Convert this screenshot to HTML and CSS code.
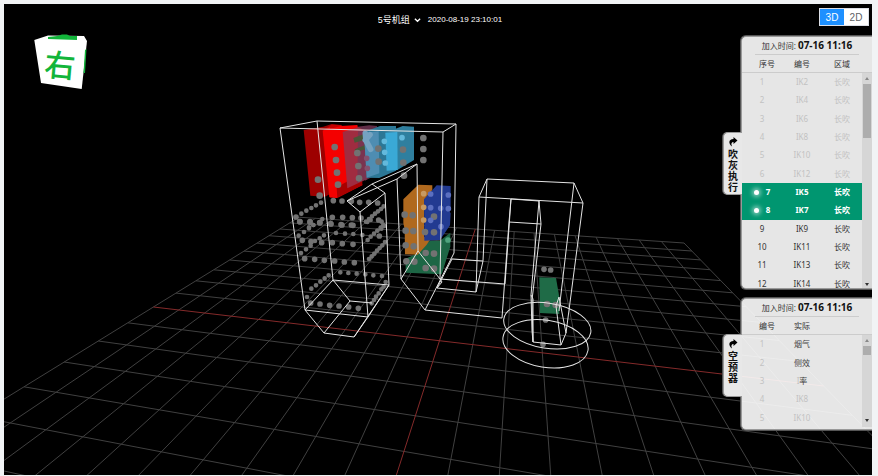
FILE: index.html
```html
<!DOCTYPE html>
<html lang="zh-CN">
<head>
<meta charset="utf-8">
<title>5号机组</title>
<link rel="stylesheet" href="styles.css">
</head>
<body>
<main class="stage">
  <svg class="scene" viewBox="4 4 868 471" preserveAspectRatio="xMidYMid slice" aria-hidden="true">
    <g id="grid" class="grid"></g>

    <!-- heating surfaces -->
    <g transform="translate(270 110) scale(.33333)">
      <path fill="#9d0000" d="M101 60L160 50 185 42 215 45 212 235 165 260 121 257z"/>
      <path fill="#c40000" d="M160 60L185 44 214 46 240 240 200 264 180 262z"/>
      <path fill="#f40000" d="M160 62L212 48 262 45 266 60 240 70 277 225 200 264 180 262z"/>
      <path fill="#f40000" d="M158 62L180 52 182 262 178 262z"/>
      <path fill="#a90000" d="M200 232L277 190 277 226 202 264z"/>
      <path fill="#5f2c46" d="M262 50L298 46 321 48 327 190 285 212z"/>
      <path fill="#a02c40" d="M218 66L264 52 284 60 290 208 232 235z"/>
      <path fill="#7a3450" d="M264 64L284 62 290 208 262 218z"/>
      <path fill="#4a5538" d="M250 84L282 72 282 90 254 98zM254 118L284 106 286 118 258 126z"/>
      <path fill="#2c7796" d="M282 66L330 48 378 48 378 182 328 204 290 203z"/>
      <path fill="#4e8db2" d="M282 68L326 64 328 190 290 203z"/>
      <path fill="#2f7f9f" d="M346 68L398 48 432 50 432 150 382 180 350 182z"/>
      <path fill="#3aa9d6" d="M346 68L382 66 383 180 350 182z"/>
      <path fill="#1d6645" d="M407 446L438 432 480 392 510 392 541 368 541 410 515 493 407 488z"/>
      <path fill="#b0691e" d="M400 268L445 224 487 226 487 240 462 270 462 380 482 386 470 404 443 434 405 433 404 358 400 340z"/>
      <path fill="#223a91" d="M462 268L500 226 542 228 542 290 534 296 542 310 540 346 510 390 463 392z"/>
    </g>
    <path fill="#1f6b47" d="M539.300 277.300L556 278 559.300 297 559.300 314 540 313z"/>

    <!-- measuring points, upper part -->
    <g class="dots" transform="translate(270 110) scale(.33333)">
      <path class="large" d="M194 111h0M198 150h0M201 188h0M204 224h0M144 209h0M149 257h0M262 129h0M265 168h0M267 205h0M325 116h0M326 155h0M399 119h0M400 158h0M402 197h0M460 84h0M460 117h0M460 150h0M404 314h0M428 316h0M492 320h0"/>
      <path d="M190 272h0M216 273h0M244 274h0M269 277h0M296 277h0M323 279h0M90 335h0M120 337h0M149 338h0M78 321h0M187 322h0M218 322h0M247 323h0M273 324h0M182 341h0M216 345h0M249 346h0M326 330h0"/>
      <path class="small" d="M153 278h0M138 286h0M124 294h0M109 302h0M94 311h0M117 355h0M130 345h0M157 327h0M288 335h0M297 327h0M306 319h0M315 311h0M324 304h0M333 297h0M341 289h0M340 345h0M332 353h0"/>
      <path stroke="#63b9dc" d="M396 83h0M343 94h0M344 127h0M346 159h0"/>
      <path stroke="#75a3c0" stroke-width="4" fill="none" d="M286 70L288 92 302 118M286 90L300 74"/>
      <path stroke="#83516f" d="M290 145h0M292 175h0"/>
      <path stroke="#c79a62" d="M461 251h0M461 292h0M461 330h0"/>
      <path stroke="#5b6fc0" d="M482 252h0M482 293h0M512 295h0M535 255h0M535 296h0M513 350h0M482 331h0"/>
    </g>
    <!-- measuring points, lower part -->
    <g class="dots" transform="translate(270 220) scale(.33333)">
      <path class="large" d="M407 32h0M430 33h0M465 36h0M492 37h0M407 76h0M431 79h0M409 124h0M433 125h0M467 99h0M492 101h0M467 144h0M492 146h0"/>
      <path d="M89 5h0M120 5h0M150 8h0M183 12h0M213 14h0M244 15h0M97 61h0M123 65h0M155 68h0M187 68h0M217 71h0M249 73h0M328 48h0M104 116h0M134 118h0M163 121h0M194 123h0M223 126h0M253 128h0M122 249h0M150 252h0M179 256h0M207 258h0M236 261h0M265 265h0"/>
      <path class="small" d="M130 15h0M117 22h0M102 36h0M86 47h0M135 63h0M149 55h0M162 46h0M198 39h0M225 41h0M250 42h0M277 45h0M335 5h0M292 6h0M302 0h0M343 18h0M334 26h0M322 32h0M312 41h0M302 50h0M293 60h0M345 66h0M337 76h0M329 84h0M321 92h0M313 101h0M305 109h0M297 117h0M122 77h0M108 88h0M93 99h0M211 157h0M235 159h0M260 161h0M286 163h0M310 166h0M336 168h0M176 166h0M164 175h0M151 185h0M138 196h0M124 206h0M111 231h0M347 186h0M341 200h0M334 208h0M326 220h0M318 230h0M312 240h0M305 250h0"/>
      <path stroke="#4fa37e" d="M534 60h0"/>
    </g>
    <g class="dots" transform="translate(460 170) scale(.33333)">
      <path d="M252 298h0M272 300h0M257 450h0M249 523h0"/>
      <path class="large" d="M261 402h0M287 405h0"/>
    </g>

    <!-- boiler casing -->
    <g class="wire">
      <path d="M280 128L317 121 456 124 443 132zL305 310M317 121L333 280M443 132L440 279M456 124L454 253"/>
      <path d="M347 201L372 184 417 164 397 179zM372 184L385 193 360 212 347 201M360 212L368 317M385 193L389 285M397 179L401 279M417 164L418 251"/>
      <path d="M305 310L368 317 389 285 333 280zL324 333 354 337 368 317M333 280L350 301 324 333M350 301L372 303M389 285L354 337"/>
      <path d="M401 279L418 251 440 279 505 284M401 279L425 310 502 318M425 310L454 253M440 279L442 282 437 288 476 292M437 288L452 259 483 261 476 292"/>
      <path d="M487 179L574 183 583 203 479 197zL483 261M479 197L476 292M511 199L539 201 541 224 509 222zL505 284M509 222L502 318M539 201L531 295 532 331M541 224L532 300 533 342M574 183L559 311M583 203L566 333M531 295L533 299 533 342 561 345 566 333 559 297 556 306 561 345M533 342L532 331"/>
      <ellipse cx="547.300" cy="325.700" rx="44" ry="22.500" transform="rotate(9 547.300 325.700)"/>
      <ellipse cx="545.500" cy="343.800" rx="43" ry="23.500" transform="rotate(9 545.500 343.800)"/>
    </g>

    <!-- orientation cube -->
    <g>
      <path fill="#fff" d="M34.300 40L48 35.500 84 36 87 41 81.700 89 41 83z"/>
      <path fill="#12b53a" d="M48 37L57 36 62 34.500 67 34.500 70 36 77 36 77 40 48 39zM86.500 49L85 73 83.500 73 85 50z"/>
      <text class="face" x="60" y="77" text-anchor="middle" transform="rotate(5 60 66)">右</text>
    </g>
  </svg>

  <header class="topbar">
    <div class="status">
      <label class="unit">
        <select aria-label="机组"><option>5号机组</option></select>
        <svg class="chevron" viewBox="0 0 8 6" aria-hidden="true"><path d="M1 1.500L4 4.500 7 1.500"/></svg>
      </label>
      <time>2020-08-19 23:10:01</time>
    </div>
    <div class="view">
      <button class="active" type="button">3D</button><button type="button">2D</button>
    </div>
  </header>

  <aside class="side">
    <section class="panel">
      <button class="tab tab-low" type="button">
        <svg viewBox="0 0 10 10" aria-hidden="true"><path d="M5.500 0L9.500 3.500 5.500 7V5C3.500 5 2.800 6.500 4 9.500 0.500 7 0 2.300 5.500 2z"/></svg>
        <span>吹灰执行</span>
      </button>
      <h2>加入时间: <b>07-16 11:16</b></h2>
      <table class="head"><tr><th>序号</th><th>编号</th><th>区域</th></tr></table>
      <div class="list list-tall">
        <table class="rows">
          <tr class="done"><td>1</td><td>IK2</td><td>长吹</td></tr>
          <tr class="done"><td>2</td><td>IK4</td><td>长吹</td></tr>
          <tr class="done"><td>3</td><td>IK6</td><td>长吹</td></tr>
          <tr class="done"><td>4</td><td>IK8</td><td>长吹</td></tr>
          <tr class="done"><td>5</td><td>IK10</td><td>长吹</td></tr>
          <tr class="done"><td>6</td><td>IK12</td><td>长吹</td></tr>
          <tr class="live"><td><i class="lamp"></i>7</td><td>IK5</td><td>长吹</td></tr>
          <tr class="live"><td><i class="lamp"></i>8</td><td>IK7</td><td>长吹</td></tr>
          <tr><td>9</td><td>IK9</td><td>长吹</td></tr>
          <tr><td>10</td><td>IK11</td><td>长吹</td></tr>
          <tr><td>11</td><td>IK13</td><td>长吹</td></tr>
          <tr><td>12</td><td>IK14</td><td>长吹</td></tr>
        </table>
        <div class="bar" aria-hidden="true"><i class="up"></i><i class="thumb thumb-long"></i><i class="down"></i></div>
      </div>
    </section>

    <section class="panel">
      <button class="tab" type="button">
        <svg viewBox="0 0 10 10" aria-hidden="true"><path d="M5.500 0L9.500 3.500 5.500 7V5C3.500 5 2.800 6.500 4 9.500 0.500 7 0 2.300 5.500 2z"/></svg>
        <span>空预器</span>
      </button>
      <h2>加入时间: <b>07-16 11:16</b></h2>
      <table class="head"><tr><th>编号</th><th>实际</th><th></th></tr></table>
      <div class="list list-short">
        <table class="rows">
          <tr class="done"><td>1</td><td class="now">烟气</td><td></td></tr>
          <tr class="done"><td>2</td><td class="now">侧效</td><td></td></tr>
          <tr class="done"><td>3</td><td>I<span class="now">率</span></td><td></td></tr>
          <tr class="done"><td>4</td><td>IK8</td><td></td></tr>
          <tr class="done"><td>5</td><td>IK10</td><td></td></tr>
        </table>
        <div class="bar" aria-hidden="true"><i class="up"></i><i class="thumb"></i><i class="down"></i></div>
      </div>
    </section>
  </aside>
</main>
<script src="scene.js"></script>
</body>
</html>
```
FILE: styles.css
```css
* { box-sizing: border-box; }

body {
  margin: 0;
  padding: 4px 6px 1px 4px;
  background: #f1f3f5;
  font-family: "Noto Sans", "Noto Sans CJK SC", sans-serif;
  font-size: 8px;
  color: #333;
}

button, select {
  margin: 0;
  padding: 0;
  border: 0;
  font: inherit;
  color: inherit;
  background: none;
}

.stage {
  position: relative;
  min-height: calc(100vh - 5px);
  background: #000;
  overflow: hidden;
}

.scene {
  position: absolute;
  inset: 0;
  width: 100%;
  height: 100%;
}

.grid path { fill: none; stroke: #404040; stroke-width: 1; }
.grid .axis { stroke: #842a2a; }
.dots path { stroke-linecap: round; stroke-width: 17; }
.dots path:not([stroke]) { stroke: #727272; }
.dots .large { stroke-width: 20; }
.dots .small { stroke-width: 14; }
.wire { fill: none; stroke: #e4e4e4; stroke-width: 1; }
.face { font: 500 31px "Noto Sans CJK SC", sans-serif; fill: #12b53a; }

.topbar {
  position: relative;
  display: grid;
  grid-template-columns: 1fr auto 1fr;
  align-items: start;
  padding: 4px 3px 0 7px;
}

.status {
  grid-column: 2;
  display: flex;
  align-items: center;
  gap: 7px;
  height: 23px;
  color: #fff;
  font-family: "Liberation Sans", "Noto Sans CJK SC", sans-serif;
}

.unit { display: flex; align-items: center; gap: 3px; font-size: 9px; }
.unit select { appearance: none; }
.unit option { color: #333; }
.chevron { width: 7px; height: 6px; fill: none; stroke: #fff; stroke-width: 1.5; }

.view {
  justify-self: end;
  display: flex;
  border: 1px solid #dcdfe6;
  background: #fff;
}

.view button {
  width: 24px;
  height: 16px;
  font: 10px "Liberation Sans", sans-serif;
  color: #606266;
}

.view .active { background: #1e90ff; color: #fff; }

.side {
  display: flex;
  flex-direction: column;
  gap: 9px;
  width: 131px;
  margin: 5px 0 0 auto;
}

.panel {
  position: relative;
  border: 1px solid #999;
  border-right: 0;
  border-radius: 5px 0 0 5px;
  box-shadow: 0 0 0 1px #555;
  background: rgba(255, 255, 255, .9);
}

.panel h2 {
  margin: 0 13px;
  border-bottom: 1px solid #ccc;
  font-size: 8px;
  font-weight: 400;
  line-height: 17px;
  text-align: center;
  white-space: nowrap;
}

.panel b { font-size: 10px; color: #111; }

table {
  width: 120px;
  border-collapse: collapse;
  table-layout: fixed;
  text-align: center;
  line-height: 16px;
}

th, td { padding: 0; font-weight: 400; }
.head th { height: 17px; }
.head th:first-child { padding-left: 10px; }

.list {
  display: grid;
  grid-template-columns: 1fr 10px;
  border-top: 1px solid #ccc;
  overflow: hidden;
}

.list-tall { height: 216px; }
.list-tall .rows { height: 220px; }
.list-short { height: 95px; }
.list-short .rows { height: 92px; }

.done { color: #c2c2c2; }
.now { color: #444; }
.live { background: #009670; color: #fff; }
.live td { font-weight: 700; }

.lamp {
  display: inline-block;
  width: 5px;
  height: 5px;
  margin-right: 7px;
  border-radius: 50%;
  background: #fff;
  box-shadow: 0 0 4px 2px rgba(255, 255, 255, .5);
}

.bar {
  display: flex;
  flex-direction: column;
  align-items: center;
  margin-bottom: 2px;
  background: #d6d6d6;
}

.up, .down { border: 2px solid transparent; }
.up { margin: 2px 0 4px; border-bottom: 3px solid #888; }
.down { margin: auto 0 3px; border-top: 3px solid #333; }
.thumb { width: 8px; height: 9px; background: #adadad; }
.thumb-long { height: 54px; }

.tab {
  position: absolute;
  left: -19px;
  top: 35px;
  display: flex;
  flex-direction: column;
  align-items: center;
  gap: 2px;
  width: 19px;
  height: 63px;
  padding-top: 4px;
  border: 1px solid #999;
  border-right: 0;
  border-radius: 5px 0 0 5px;
  box-shadow: -1px 0 0 #555;
  background: #e8e8e8;
  color: #111;
  font-weight: 700;
  font-size: 10px;
  line-height: 11px;
}

.tab-low { top: 95px; }
.tab svg { width: 10px; height: 10px; }
.tab span { width: 10px; }
```
FILE: scene.js
```js
// Ground grid: 20 x 20 cells seen in perspective, axes in red.
const SIZE = 10;

function project(u, v) {
  const w = 1 - 0.01464 * u - 0.0743 * v;
  return [
    (439.5 + 26.35 * u - 38.9 * v) / w,
    (340.7 - 1.12 * u - 5.85 * v) / w
  ].map(n => n.toFixed(1)).join(" ");
}

function addLine(from, to, axis) {
  const path = document.createElementNS("http://www.w3.org/2000/svg", "path");
  path.setAttribute("d", `M${project(...from)}L${project(...to)}`);
  if (axis) path.setAttribute("class", "axis");
  document.getElementById("grid").append(path);
}

for (let i = -SIZE; i <= SIZE; i++) {
  if (i === 0) continue;
  addLine([i, -SIZE], [i, SIZE]);
  addLine([-SIZE, i], [SIZE, i]);
}
addLine([0, -SIZE], [0, SIZE], true);
addLine([-SIZE, 0], [SIZE, 0], true);
```
